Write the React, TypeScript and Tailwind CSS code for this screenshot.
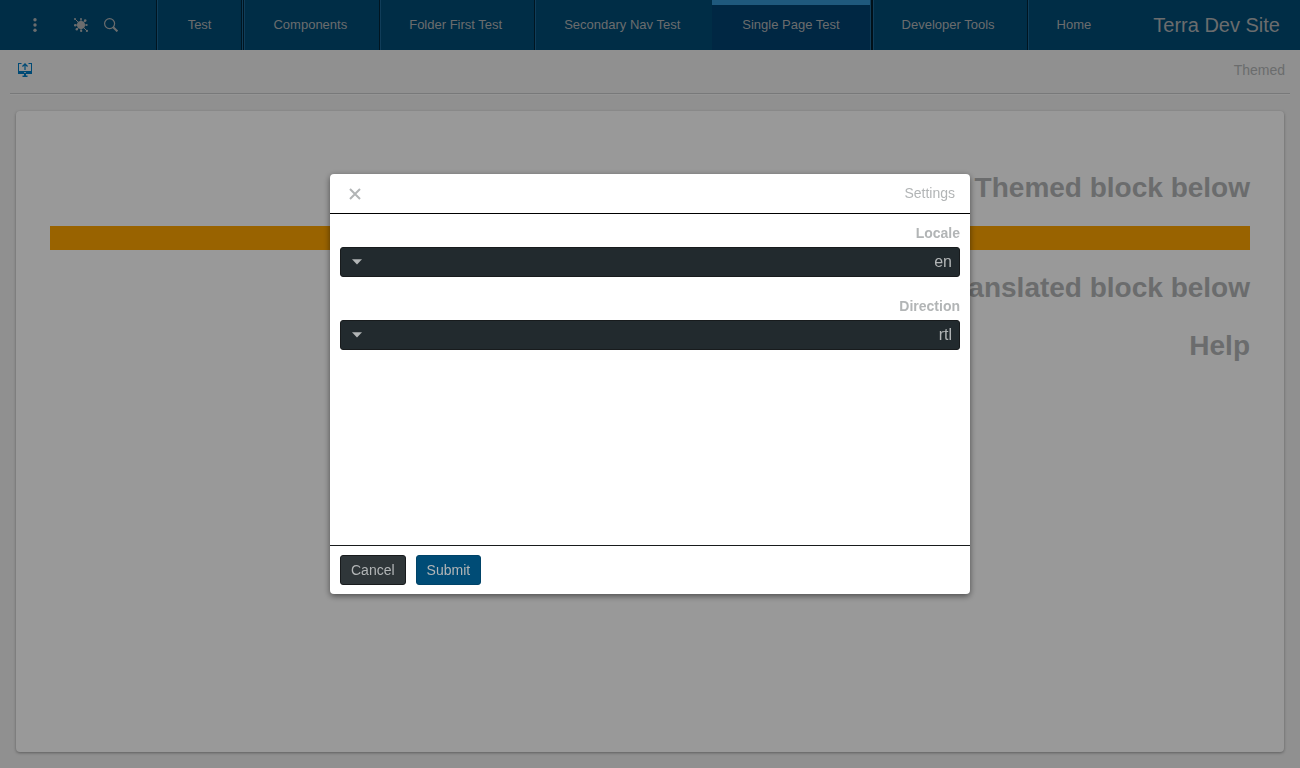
import React from "react";

const tabBase = "flex items-center whitespace-nowrap";
const tabPlain = `${tabBase} border-r border-l border-r-[#002338] border-l-[#1c6794] pr-8 pl-7`;

const tabs = [
  { label: "Home", className: `${tabBase} border-l border-l-[#1c6794] pr-8 pl-7` },
  { label: "Developer Tools", className: tabPlain },
  {
    label: "Single Page Test",
    active: true,
    className: `${tabBase} relative border-r-2 border-[#001b2a] bg-[#004170] pr-[31px] pl-[30px] shadow-[inset_-1px_0_0_#1c6794] before:absolute before:top-0 before:right-px before:left-0 before:h-[5px] before:bg-[#3595d0]`,
  },
  { label: "Secondary Nav Test", className: `${tabBase} border-l border-l-[#1c6794] pr-8 pl-7` },
  { label: "Folder First Test", className: tabPlain },
  { label: "Components", className: tabPlain },
  {
    label: "Test",
    className: `${tabBase} border-r border-l border-r-[#002338] border-l-[#1c6794] pr-8 pl-[30px] shadow-[-1px_0_0_#002338,inset_-1px_0_0_#1c6794,inset_-2px_0_0_#002338]`,
  },
];

function EllipsisIcon() {
  return (
    <svg width="14" height="14" viewBox="0 0 14 14" fill="currentColor" aria-hidden="true">
      <circle cx="7" cy="1.7" r="1.7" />
      <circle cx="7" cy="7" r="1.7" />
      <circle cx="7" cy="12.3" r="1.7" />
    </svg>
  );
}

function BacteriaIcon() {
  return (
    <svg width="14" height="14" viewBox="0 0 14 14" fill="currentColor" stroke="currentColor" aria-hidden="true">
      <circle cx="7" cy="7" r="4" stroke="none" />
      <path d="M7 7V.8M7 7v6.4M7 7H.8M7 7h5.4M7 7 1.3 1.3M7 7l5.8 5.8M7 7l4-4.2M7 7l-4 4.2" strokeWidth="1" />
      <g stroke="none">
        <circle cx="1" cy="1" r="1" />
        <circle cx="7" cy="0.9" r="0.9" />
        <circle cx="11.2" cy="2.6" r="1.3" />
        <circle cx="1.2" cy="7.2" r="1.2" />
        <circle cx="12.7" cy="7" r="1" />
        <circle cx="2.8" cy="11.3" r="1.2" />
        <circle cx="7.2" cy="12.9" r="1.1" />
        <circle cx="12.9" cy="12.9" r="1.1" />
      </g>
    </svg>
  );
}

function SearchIcon() {
  return (
    <svg width="14" height="14" viewBox="0 0 14 14" fill="none" stroke="currentColor" aria-hidden="true">
      <circle cx="5.6" cy="5.6" r="5" strokeWidth="1.2" />
      <path d="m9.2 9.2 4.2 4.2" strokeWidth="2" />
    </svg>
  );
}

function MonitorUpIcon() {
  return (
    <svg width="14" height="14" viewBox="0 0 14 14" fill="currentColor" aria-hidden="true">
      <path d="M0 0h3.5v1H1v7h12V1h-2.500V0H14v11H0z" />
      <path d="M7 0 4 3l.9.9L6.400 2.600V7h1.200V2.600L9.100 3.900 10 3z" />
      <path d="M6 11h2v1.500h1.500V14h-5v-1.500H6z" />
      <path d="M6 9h2v1H6z" fill="#b8d4e4" />
    </svg>
  );
}

function CloseIcon() {
  return (
    <svg width="12" height="12" viewBox="0 0 12 12" fill="none" stroke="currentColor" strokeWidth="2" aria-hidden="true">
      <path d="M1 1l10 10M11 1 1 11" />
    </svg>
  );
}

function SelectField({ id, label, value, options }: { id: string; label: string; value: string; options: string[] }) {
  return (
    <div>
      <label htmlFor={id} className="block text-sm leading-5 font-bold">
        {label}
      </label>
      <div className="relative mt-1">
        <select
          id={id}
          defaultValue={value}
          className="block h-[30px] w-full appearance-none rounded-[3px] border border-[#181b1d] bg-[#222a2e] ps-[7px] pe-8 text-base leading-7 text-[#b2b5b6]"
        >
          {options.map((option) => (
            <option key={option}>{option}</option>
          ))}
        </select>
        <svg className="pointer-events-none absolute top-3 left-3 text-[#b2b5b6]" width="10" height="6" viewBox="0 0 10 6" fill="currentColor" aria-hidden="true">
          <path d="M0 .3h10L5 5.500z" />
        </svg>
      </div>
    </div>
  );
}

export default function App() {
  return (
    <div dir="rtl" className="flex min-h-screen flex-col bg-[#f0f0f0] font-['Liberation_Sans',Arial,sans-serif] text-[#b2b5b6]">
      <header className="flex h-[50px] items-stretch bg-[#004c76]">
        <div className="flex items-center ps-5 pe-[30px] text-xl whitespace-nowrap">Terra Dev Site</div>
        <nav className="flex text-[13px]">
          {tabs.map((tab) => (
            <a key={tab.label} href="#" aria-current={tab.active ? "page" : undefined} className={tab.className}>
              {tab.label}
            </a>
          ))}
        </nav>
        <div className="ms-auto flex items-center pl-7">
          <button type="button" aria-label="Search"><SearchIcon /></button>
          <button type="button" aria-label="Theme" className="ms-4"><BacteriaIcon /></button>
          <button type="button" aria-label="More options" className="ms-8"><EllipsisIcon /></button>
        </div>
      </header>

      <div className="mx-[10px] flex h-11 items-center justify-between border-b border-[#c8cacb] px-[5px] pb-1 text-sm shadow-[0_1px_0_#f8f8f8]">
        <span>Themed</span>
        <button type="button" aria-label="Open menu" className="ml-[3px] text-[#007cc3]">
          <MonitorUpIcon />
        </button>
      </div>

      <main className="mx-4 mt-[17px] mb-4 flex-1 rounded-[4px] bg-white px-[34px] pt-[59px] text-[28px] leading-9 font-bold shadow-[0_1px_3px_rgba(0,0,0,0.35)]">
        <h2>Themed block below</h2>
        <div className="my-5 h-6 bg-[#ffa500]" />
        <h2>Translated block below</h2>
        <h2 className="mt-[22px]">Help</h2>
      </main>

      <div className="fixed inset-0 flex items-center justify-center bg-black/40">
        <section role="dialog" aria-modal="true" aria-labelledby="settings-title" className="flex min-h-[420px] w-full max-w-[640px] flex-col rounded-[4px] bg-white shadow-[0_2px_6px_rgba(0,0,0,0.5)]">
          <header className="flex h-10 items-center justify-between border-b border-black pr-[15px] pl-[19px] text-sm">
            <h1 id="settings-title" className="pb-0.5">Settings</h1>
            <button type="button" aria-label="Close"><CloseIcon /></button>
          </header>
          <div className="flex flex-1 flex-col gap-[19px] px-[10px] pt-[9px]">
            <SelectField id="locale" label="Locale" value="en" options={["en", "ar", "de", "es", "fr"]} />
            <SelectField id="direction" label="Direction" value="rtl" options={["rtl", "ltr"]} />
          </div>
          <footer className="flex justify-end gap-[10px] border-t border-[#181b1d] px-[10px] py-[9px] text-sm">
            <button type="submit" className="h-[30px] rounded-[3px] border border-[#004368] bg-[#004c76] px-[10px]">
              Submit
            </button>
            <button type="button" className="h-[30px] rounded-[3px] border border-[#181b1d] bg-[#2f3639] px-[10px]">
              Cancel
            </button>
          </footer>
        </section>
      </div>
    </div>
  );
}
